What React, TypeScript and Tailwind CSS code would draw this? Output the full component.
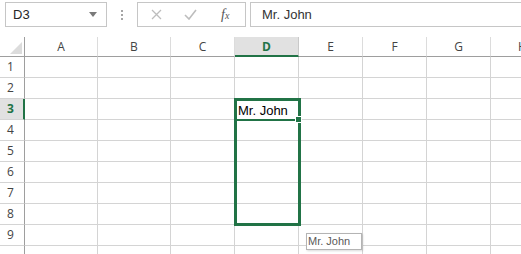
import React from "react";

const cols = ["A", "B", "C", "D", "E", "F", "G", "H"];
const colW = [73, 73, 64, 64, 64, 64, 64, 64];
const rows = [1, 2, 3, 4, 5, 6, 7, 8, 9, 10];

export default function App() {
  return (
    <div className="relative w-[521px] h-[254px] overflow-hidden bg-white" style={{ fontFamily: '"Open Sans", "Liberation Sans", sans-serif' }}>
      {/* toolbar */}
      <div className="flex h-[37px] items-start pt-[2px]">
        <div className="ml-[5px] flex h-[25px] w-[102px] shrink-0 items-center justify-between border border-[#c6c6c6] pl-[7px] pr-[9px]">
          <span className="text-[13px] text-[#262626]" style={{ fontFamily: '"Liberation Sans", sans-serif' }}>D3</span>
          <svg width="8" height="5" viewBox="0 0 8 5"><path d="M0 0 L8 0 L4 5 Z" fill="#7a7a7a" /></svg>
        </div>
        <div className="ml-[13px] mt-[8px] flex w-[4px] shrink-0 flex-col items-center gap-[2px]">
          <div className="h-[2px] w-[2px] bg-[#a6a6a6]" />
          <div className="h-[2px] w-[2px] bg-[#a6a6a6]" />
          <div className="h-[2px] w-[2px] bg-[#a6a6a6]" />
        </div>
        <div className="ml-[13px] flex h-[25px] w-[109px] shrink-0 items-center border border-[#c6c6c6]">
          <svg className="ml-[13px]" width="11" height="11" viewBox="0 0 11 11"><path d="M1 1 L10 10 M10 1 L1 10" stroke="#bdbdbd" strokeWidth="1.3" /></svg>
          <svg className="ml-[22px]" width="13" height="11" viewBox="0 0 13 11"><path d="M1 6 L5 10 L12 1" stroke="#bdbdbd" strokeWidth="1.6" fill="none" /></svg>
          <span className="ml-[24px] text-[14px] italic text-[#555]" style={{ fontFamily: '"Liberation Serif", serif' }}>f<span className="text-[10px]">x</span></span>
        </div>
        <div className="ml-[4px] flex h-[25px] flex-1 items-center border border-r-0 border-[#c6c6c6] pl-[11px]">
          <span className="text-[13px] text-[#333]" style={{ fontFamily: '"Liberation Sans", sans-serif' }}>Mr. John</span>
        </div>
      </div>

      {/* grid */}
      <div className="flex flex-col">
        <div className="flex h-[20px]">
          <div className="relative w-[25px] shrink-0 border-b border-r border-[#9e9e9e]">
            <svg className="absolute left-[10px] top-[5px]" width="12" height="12" viewBox="0 0 12 12"><path d="M12 0 L12 12 L0 12 Z" fill="#dcdcdc" /></svg>
          </div>
          {cols.map((c, i) => {
            const sel = c === "D";
            return (
              <div
                key={c}
                style={{ width: colW[i] }}
                className={
                  sel
                    ? "flex shrink-0 items-center justify-center border-b-2 border-r border-b-[#217346] border-r-[#c9c9c9] bg-[#e1e1e1] pt-[2px] text-[12px] font-bold text-[#217346]"
                    : "flex shrink-0 items-center justify-center border-b border-r border-b-[#9e9e9e] border-r-[#dcdcdc] text-[12px] text-[#444]"
                }
              >
                {c}
              </div>
            );
          })}
        </div>
        {rows.map((r) => {
          const sel = r === 3;
          return (
            <div key={r} className="flex h-[21px]">
              <div
                className={
                  sel
                    ? "flex w-[25px] shrink-0 items-center border-b border-r-2 border-b-[#d4d4d4] border-r-[#217346] bg-[#e1e1e1] pl-[7px] text-[12px] font-bold text-[#217346]"
                    : "flex w-[25px] shrink-0 items-center border-b border-r border-b-[#d4d4d4] border-r-[#9e9e9e] pl-[7px] text-[12px] text-[#444]"
                }
              >
                {r < 10 ? r : ""}
              </div>
              {cols.map((c, i) => (
                <div key={c} style={{ width: colW[i] }} className="shrink-0 border-b border-r border-[#d4d4d4]" />
              ))}
            </div>
          );
        })}
      </div>

      {/* selection */}
      <div className="absolute left-[234px] top-[98px] h-[128px] w-[67px] border-[3px] border-[#217346]">
        <div className="flex h-[20px] items-end border-b-2 border-[#217346] pl-[1px] text-[13px] leading-[16px] text-black" style={{ fontFamily: '"Liberation Sans", sans-serif' }}>
          Mr. John
        </div>
      </div>
      <div className="absolute left-[296px] top-[117px] h-[5px] w-[5px] bg-[#217346] outline outline-1 outline-white" />

      {/* tooltip */}
      <div
        className="absolute left-[306px] top-[233px] flex h-[17px] w-[56px] items-center border border-[#b4b4b4] bg-white pl-[1px] text-[11px] text-[#595959] shadow-[1px_1px_2px_rgba(0,0,0,0.15)]"
        style={{ fontFamily: '"Liberation Sans", sans-serif' }}
      >
        Mr. John
      </div>
    </div>
  );
}
